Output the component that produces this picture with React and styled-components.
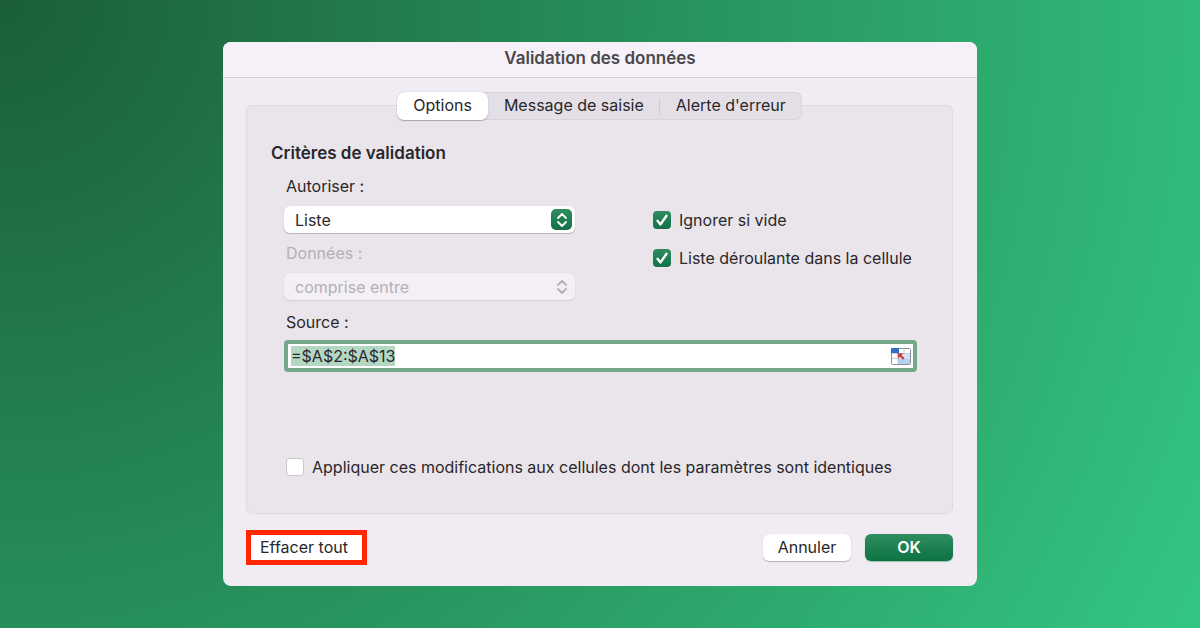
import React, { useEffect, useRef, useState } from "react";
import styled, { createGlobalStyle } from "styled-components";

const tabs = ["Options", "Message de saisie", "Alerte d'erreur"];

function Chevrons() {
  return (
    <svg width="12" height="16" viewBox="0 0 12 16" fill="none" stroke="currentColor" strokeWidth="1.8" strokeLinecap="round" strokeLinejoin="round">
      <path d="M2 6l4-4 4 4M2 10l4 4 4-4" />
    </svg>
  );
}

function RangeIcon() {
  return (
    <svg width="20" height="17" viewBox="0 0 20 17">
      <rect x="0.5" y="0.5" width="19" height="16" rx="1" fill="#fff" stroke="#8b8f9c" />
      <path d="M1 5.5h18M1 10.5h18M7 1v15M13 1v15" stroke="#c9cfdd" />
      <rect x="7" y="11" width="12" height="5" fill="#b5d2f2" />
      <rect x="13" y="6" width="6" height="5" fill="#d3e4f7" />
      <rect x="0" y="0" width="8" height="5" fill="#2f6fc4" />
      <path d="M6.500 5l6 .5-1.800 1.700 3 3-1.700 1.600-3-3L7 10.700z" fill="#c8404a" />
    </svg>
  );
}

function Check({ id, label, checked, onChange }) {
  return (
    <CheckRow>
      <CheckBox>
        <input id={id} type="checkbox" checked={checked} onChange={onChange} />
        {checked && (
          <svg width="18" height="18" viewBox="0 0 18 18" fill="none" stroke="#fff" strokeWidth="2.4" strokeLinecap="round" strokeLinejoin="round">
            <path d="M4.500 9.800l3 3.600 6-8.600" />
          </svg>
        )}
      </CheckBox>
      <label htmlFor={id}>{label}</label>
    </CheckRow>
  );
}

function App() {
  const [active, setActive] = useState(0);
  const [ignoreBlank, setIgnoreBlank] = useState(true);
  const [dropdown, setDropdown] = useState(true);
  const [applyAll, setApplyAll] = useState(false);
  const [source, setSource] = useState("=$A$2:$A$13");
  const sourceRef = useRef(null);

  useEffect(() => {
    sourceRef.current.focus();
    sourceRef.current.select();
  }, []);

  return (
    <>
      <GlobalStyle />
      <Page>
        <Dialog role="dialog" aria-labelledby="title">
          <TitleBar id="title">Validation des données</TitleBar>
          <Body>
            <Tabs role="tablist">
              {tabs.map((tab, i) => (
                <Tab
                  key={tab}
                  role="tab"
                  aria-selected={active === i}
                  $active={active === i}
                  $divider={i > 0 && i < tabs.length - 1}
                  onClick={() => setActive(i)}
                >
                  {tab}
                </Tab>
              ))}
            </Tabs>
            <Panel>
              <Heading>Critères de validation</Heading>
              <Criteria>
                <Fields>
                  <Field>
                    <label htmlFor="allow">Autoriser :</label>
                    <SelectWrap>
                      <select id="allow" defaultValue="Liste">
                        <option>Liste</option>
                        <option>Date</option>
                      </select>
                      <Stepper><Chevrons /></Stepper>
                    </SelectWrap>
                  </Field>
                  <Field $disabled>
                    <label htmlFor="data">Données :</label>
                    <SelectWrap $disabled>
                      <select id="data" disabled>
                        <option>comprise entre</option>
                      </select>
                      <Stepper $disabled><Chevrons /></Stepper>
                    </SelectWrap>
                  </Field>
                </Fields>
                <Checks>
                  <Check id="blank" label="Ignorer si vide" checked={ignoreBlank} onChange={() => setIgnoreBlank(!ignoreBlank)} />
                  <Check id="dropdown" label="Liste déroulante dans la cellule" checked={dropdown} onChange={() => setDropdown(!dropdown)} />
                </Checks>
              </Criteria>
              <SourceField>
                <label htmlFor="source">Source :</label>
                <SourceBox>
                  <input id="source" ref={sourceRef} value={source} spellCheck={false} onChange={(e) => setSource(e.target.value)} />
                  <PickButton aria-label="Sélectionner la plage"><RangeIcon /></PickButton>
                </SourceBox>
              </SourceField>
              <ApplyRow>
                <Check
                  id="apply"
                  label="Appliquer ces modifications aux cellules dont les paramètres sont identiques"
                  checked={applyAll}
                  onChange={() => setApplyAll(!applyAll)}
                />
              </ApplyRow>
            </Panel>
            <Footer>
              <ClearButton>Effacer tout</ClearButton>
              <Actions>
                <Button>Annuler</Button>
                <Button $primary>OK</Button>
              </Actions>
            </Footer>
          </Body>
        </Dialog>
      </Page>
    </>
  );
}

export default App;

const GlobalStyle = createGlobalStyle`
  * {
    box-sizing: border-box;
  }
  body {
    margin: 0;
  }
  body, button, input, select {
    font-family: Inter, "Liberation Sans", sans-serif;
    font-size: 16px;
    line-height: 20px;
    color: #29272b;
  }
`

const Page = styled.main`
  min-height: 100vh;
  display: flex;
  align-items: center;
  justify-content: center;
  background: radial-gradient(circle at 0 0, #1b5e37, #34c682);
`

const Dialog = styled.section`
  width: 100%;
  max-width: 754px;
  border-radius: 8px;
  overflow: hidden;
  background: #f1ecf3;
`

const TitleBar = styled.h1`
  margin: 0;
  padding: 6px 0 9px;
  border-bottom: 1px solid #d2cdd4;
  background: #f6f1f8;
  color: #4b484d;
  font-size: 17px;
  font-weight: 600;
  line-height: 20px;
  text-align: center;
`

const Body = styled.div`
  padding: 14px 24px 21px 23px;
`

const Tabs = styled.div`
  position: relative;
  width: fit-content;
  margin: 0 auto -15px;
  display: flex;
  border-radius: 7px;
  background: #e4dfe6;
  box-shadow: inset 0 0 0 1px #d9d4db;
`

const Tab = styled.button`
  height: 28px;
  padding: 0 16px 2px;
  border: none;
  border-radius: 7px;
  background: ${(p) => (p.$active ? "#fff" : "transparent")};
  box-shadow: ${(p) => (p.$active ? "0 1px 1px #a9a5ab, 0 0 1px #a9a5ab" : "none")};

  &::after {
    content: "";
    display: ${(p) => (p.$divider ? "inline-block" : "none")};
    width: 1px;
    height: 16px;
    margin: 0 -16px 0 15px;
    vertical-align: middle;
    background: #d0cbd2;
  }
`

const Panel = styled.div`
  padding: 37px 35px 36px 24px;
  border: 1px solid #dfdae1;
  border-radius: 6px;
  background: #eae5eb;
`

const Heading = styled.h2`
  margin: 0 0 13px;
  font-size: 17px;
  font-weight: 600;
  line-height: 20px;
`

const Criteria = styled.div`
  display: flex;
  gap: 78px;
  padding-left: 13px;
`

const Fields = styled.div`
  flex: 0 1 291px;
  display: grid;
  gap: 10px;
`

const Field = styled.div`
  display: grid;
  gap: 10px;
  color: ${(p) => (p.$disabled ? "#b3afb5" : "inherit")};

  label {
    padding-left: 2px;
  }
`

const SelectWrap = styled.div`
  display: grid;
  align-items: center;
  border-radius: 6px;
  background: ${(p) => (p.$disabled ? "#f3eff4" : "#fff")};
  box-shadow: 0 1px 1px ${(p) => (p.$disabled ? "#d2cdd4" : "#b5b0b7")}, 0 0 1px #c8c3ca;

  > * {
    grid-area: 1 / 1;
  }
  select {
    appearance: none;
    width: 100%;
    height: 27px;
    padding: 0 32px 0 11px;
    border: none;
    background: transparent;
    color: ${(p) => (p.$disabled ? "#b3afb5" : "#29272b")};
    opacity: 1;
    outline: none;
  }
`

const Stepper = styled.span`
  justify-self: end;
  width: 21px;
  height: 21px;
  margin-right: 3px;
  display: grid;
  place-items: center;
  border-radius: 5px;
  background: ${(p) => (p.$disabled ? "none" : "linear-gradient(#2f8d60, #117245)")};
  color: ${(p) => (p.$disabled ? "#b3afb5" : "#fff")};
  pointer-events: none;
`

const Checks = styled.div`
  display: grid;
  align-content: start;
  gap: 18px;
  padding-top: 34px;
`

const CheckRow = styled.div`
  display: flex;
  align-items: center;
  gap: 8px;
`

const CheckBox = styled.span`
  display: grid;

  > * {
    grid-area: 1 / 1;
  }
  input {
    appearance: none;
    width: 18px;
    height: 18px;
    margin: 0;
    border: 1px solid #cbc6cd;
    border-radius: 4px;
    background: #fff;
  }
  input:checked {
    border: none;
    background: linear-gradient(#2f8d60, #117245);
  }
  svg {
    pointer-events: none;
  }
`

const SourceField = styled.div`
  display: grid;
  gap: 8px;
  margin-top: 12px;
  padding-left: 13px;

  label {
    padding-left: 2px;
  }
`

const SourceBox = styled.div`
  display: flex;
  align-items: center;
  height: 32px;
  padding-right: 2px;
  border: 4px solid #75a88a;
  border-radius: 4px;
  background: #fff;

  input {
    flex: 1;
    min-width: 0;
    padding: 0 3px;
    border: none;
    outline: none;
    background: transparent;
  }
  input::selection {
    background: #b3d7c3;
    color: #29272b;
  }
`

const PickButton = styled.button`
  display: flex;
  padding: 0;
  border: none;
  background: none;
`

const ApplyRow = styled.div`
  margin-top: 85px;
  padding-left: 15px;
`

const Footer = styled.div`
  display: flex;
  align-items: center;
  justify-content: space-between;
  margin-top: 16px;
`

const ClearButton = styled.button`
  height: 35px;
  padding: 0 14px 2px 9px;
  border: 5px solid #ff2600;
  background: #fff;
`

const Actions = styled.div`
  display: flex;
  gap: 14px;
`

const Button = styled.button`
  width: 88px;
  height: 27px;
  padding: 0 0 2px;
  border: none;
  border-radius: 6px;
  background: ${(p) => (p.$primary ? "linear-gradient(#2f8d60, #0d7243)" : "#fff")};
  color: ${(p) => (p.$primary ? "#fff" : "#29272b")};
  font-weight: ${(p) => (p.$primary ? 600 : 400)};
  box-shadow: 0 1px 1px ${(p) => (p.$primary ? "#9cc4ae" : "#b5b0b7")}, 0 0 1px #c8c3ca;
`
